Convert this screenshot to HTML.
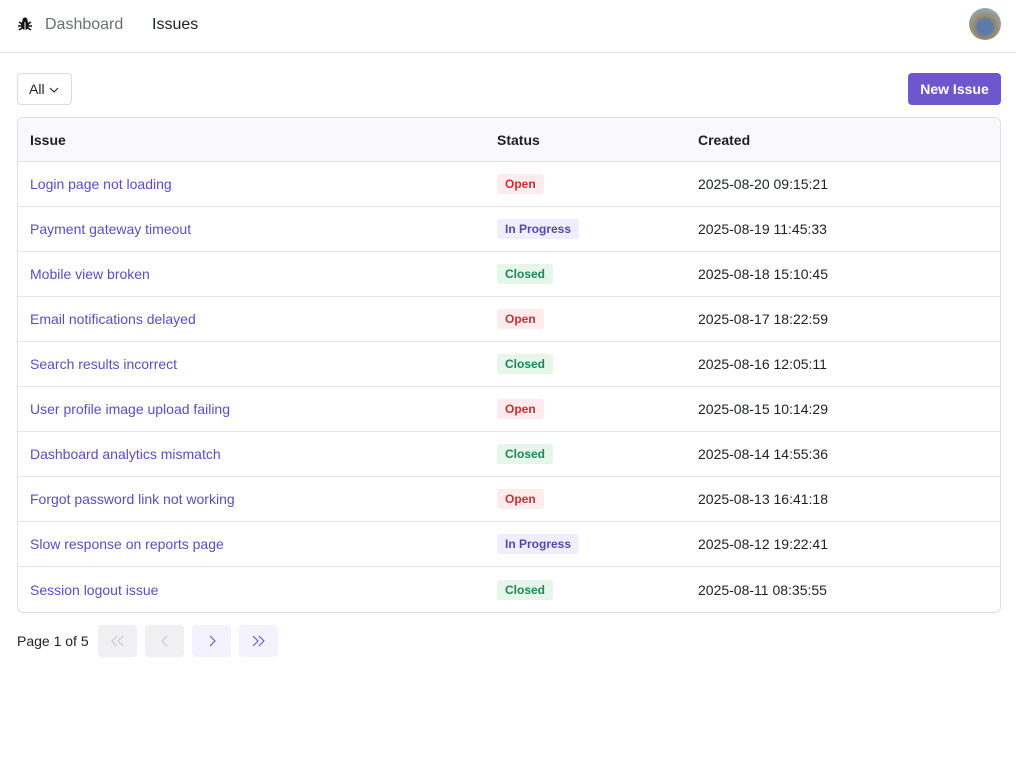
<!DOCTYPE html>
<html><head><style>
*{box-sizing:border-box;margin:0;padding:0}
body{width:1016px;height:758px;background:#fff;font-family:"Liberation Sans",sans-serif;color:#1c2024;position:relative;overflow:hidden}
.nav{height:53px;border-bottom:1px solid #e4e4e7;position:relative}
.nav span{position:absolute;top:16px;font-size:16px}
.btn{position:absolute;border-radius:4px;font-size:14px}
table{position:absolute;left:17px;top:117px;width:984px;border:1px solid #dfdfe3;border-radius:6px;border-collapse:separate;border-spacing:0;overflow:hidden}
td,th{height:45px;border-bottom:1px solid #e4e4e7;font-size:14px;text-align:left;padding-left:12px}
th{background:#f9f9fb;font-weight:bold;height:44px}
tr:last-child td{border-bottom:none}
td a{color:#5b4cc4;text-decoration:none}
.b{display:inline-block;font-size:12px;font-weight:bold;padding:3px 8px;border-radius:3px}
.o{background:#feebec;color:#ce2c31}.p{background:#f0eefe;color:#5746af}.c{background:#e6f6eb;color:#218358}
.pg{position:absolute;top:625px;width:39px;height:32px;border-radius:4px}
.pg svg{position:absolute;left:13px;top:10px}
</style></head><body>
<div class="nav">
<svg style="position:absolute;left:18px;top:16px" width="14" height="15" viewBox="0 0 14 15"><ellipse cx="7" cy="9" rx="4" ry="5" fill="#111"/><circle cx="7" cy="4" r="2.5" fill="#111"/><path d="M1 6l3 2M13 6l-3 2M0 10h3M14 10h-3M1 14l3-2M13 14l-3-2" stroke="#111" stroke-width="1.5"/><path d="M7 6v8" stroke="#fff" stroke-width="1"/></svg>
<span style="left:45px;color:#6b6f76">Dashboard</span>
<span style="left:152px">Issues</span>
<div style="position:absolute;left:969px;top:8px;width:32px;height:32px;border-radius:50%;background:radial-gradient(circle at 50% 60%,#5d7aa8 0 30%,#9a8a6a 45%,#8fb0c8 80%)"></div>
</div>
<div class="btn" style="left:17px;top:73px;width:55px;height:32px;border:1px solid #d9d9e0;line-height:30px;padding-left:11px">All <svg width="10" height="6" viewBox="0 0 10 6" style="margin-left:1px;vertical-align:middle"><path d="M1 1l4 4 4-4" stroke="#1c2024" fill="none" stroke-width="1"/></svg></div>
<div class="btn" style="left:908px;top:73px;width:93px;height:32px;background:#6e56cf;color:#fff;font-weight:bold;text-align:center;line-height:32px">New Issue</div>
<table>
<tr><th style="width:467px">Issue</th><th style="width:201px">Status</th><th>Created</th></tr>
<tr><td><a>Login page not loading</a></td><td><span class="b o">Open</span></td><td>2025-08-20 09:15:21</td></tr>
<tr><td><a>Payment gateway timeout</a></td><td><span class="b p">In Progress</span></td><td>2025-08-19 11:45:33</td></tr>
<tr><td><a>Mobile view broken</a></td><td><span class="b c">Closed</span></td><td>2025-08-18 15:10:45</td></tr>
<tr><td><a>Email notifications delayed</a></td><td><span class="b o">Open</span></td><td>2025-08-17 18:22:59</td></tr>
<tr><td><a>Search results incorrect</a></td><td><span class="b c">Closed</span></td><td>2025-08-16 12:05:11</td></tr>
<tr><td><a>User profile image upload failing</a></td><td><span class="b o">Open</span></td><td>2025-08-15 10:14:29</td></tr>
<tr><td><a>Dashboard analytics mismatch</a></td><td><span class="b c">Closed</span></td><td>2025-08-14 14:55:36</td></tr>
<tr><td><a>Forgot password link not working</a></td><td><span class="b o">Open</span></td><td>2025-08-13 16:41:18</td></tr>
<tr><td><a>Slow response on reports page</a></td><td><span class="b p">In Progress</span></td><td>2025-08-12 19:22:41</td></tr>
<tr><td><a>Session logout issue</a></td><td><span class="b c">Closed</span></td><td>2025-08-11 08:35:55</td></tr>
</table>
<div style="position:absolute;left:17px;top:633px;font-size:14px">Page 1 of 5</div>
<div class="pg" style="left:98px;background:#f0f0f3"><svg width="13" height="12" viewBox="0 0 13 12"><path d="M6 1L1 6l5 5M12 1L7 6l5 5" stroke="#c4c4cc" fill="none"/></svg></div>
<div class="pg" style="left:145px;background:#f0f0f3"><svg width="13" height="12" viewBox="0 0 13 12"><path d="M9 1L4 6l5 5" stroke="#c4c4cc" fill="none"/></svg></div>
<div class="pg" style="left:192px;background:#f4f2ff"><svg width="13" height="12" viewBox="0 0 13 12"><path d="M5 1l5 5-5 5" stroke="#5b4cc4" fill="none"/></svg></div>
<div class="pg" style="left:239px;background:#f4f2ff"><svg width="13" height="12" viewBox="0 0 13 12"><path d="M1 1l5 5-5 5M7 1l5 5-5 5" stroke="#5b4cc4" fill="none"/></svg></div>
</body></html>
